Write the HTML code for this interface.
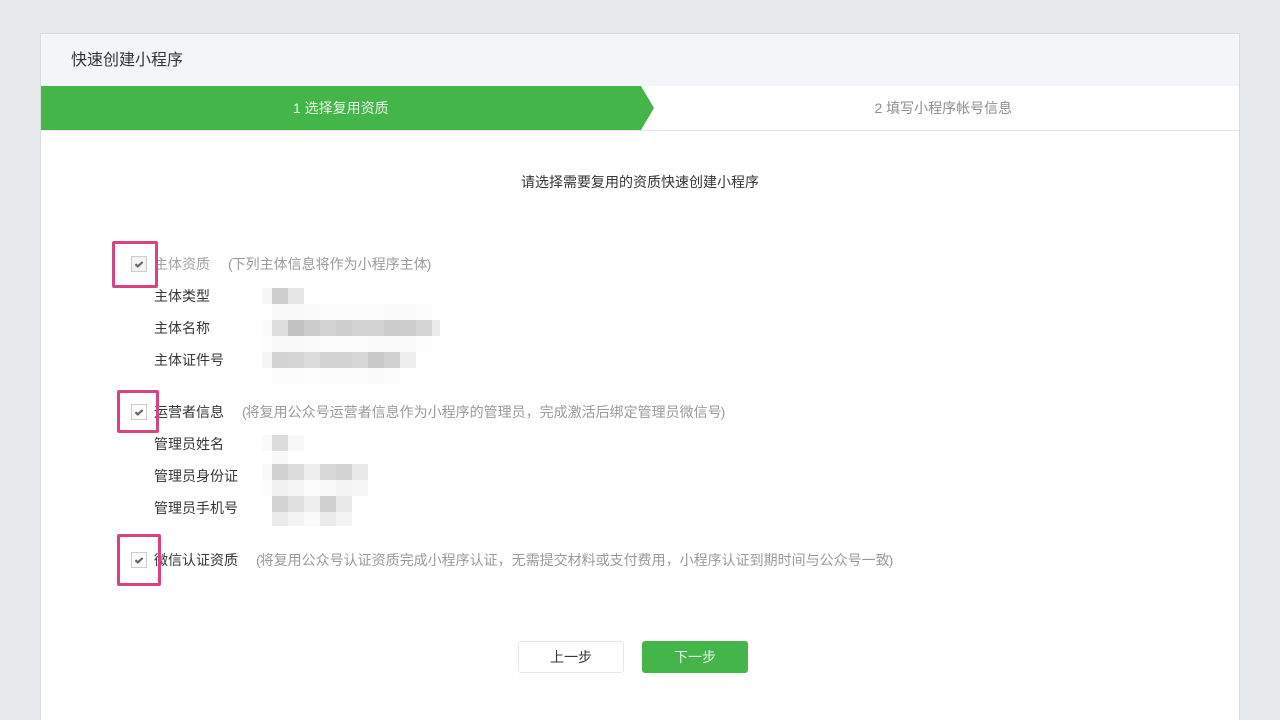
<!DOCTYPE html>
<html lang="zh-CN">
<head>
<meta charset="utf-8">
<title>快速创建小程序</title>
<style>
html,body{margin:0;padding:0;width:1280px;height:720px;overflow:hidden;background:#e6e8ec;}
body{position:relative;font-family:"Liberation Sans","Noto Sans CJK SC",sans-serif;font-size:14px;color:#353535;filter:blur(0.3px);}
.a{position:absolute;white-space:nowrap;}
#card{left:40px;top:33px;width:1198px;height:700px;background:#fff;border:1px solid #d9dadc;}
#head{left:41px;top:34px;width:1198px;height:52px;background:#f3f5f9;}
#title{left:71px;top:49px;font-size:16px;line-height:24px;color:#353535;}
#line{left:41px;top:130px;width:1198px;height:1px;background:#e7e7eb;}
.t{line-height:20px;}
.lab{left:154px;}
.hint{color:#9a9a9a;}
.n{letter-spacing:-1px;}
.cb{width:14px;height:14px;border:1px solid #cdcdcd;background:#fbfbfb;}
.cb svg{position:absolute;left:0;top:0;}
.pink{box-sizing:border-box;border:3px solid #d8447f;border-radius:2px;}
.r{display:flex;height:16px;position:absolute;}
.r i{display:block;height:16px;width:16px;}
.btn{box-sizing:border-box;height:32px;line-height:30px;text-align:center;border-radius:3px;top:641px;}
</style>
</head>
<body>
<div class="a" id="card"></div>
<div class="a" id="head"></div>
<div class="a" id="title">快速创建小程序</div>

<svg class="a" style="left:41px;top:86px" width="614" height="44"><polygon points="0,0 600,0 613,22 600,44 0,44" fill="#44b549"/></svg>
<div class="a t" style="left:293px;top:98px;color:#e9f6ea">1 选择复用资质</div>
<div class="a t" style="left:874.5px;top:98px;color:#8d8d8d">2 填写小程序帐号信息</div>
<div class="a" id="line"></div>

<div class="a t" style="left:521px;top:172px;color:#353535">请选择需要复用的资质快速创建小程序</div>

<!-- section 1 -->
<div class="a t lab" style="top:254px;color:#a3a3a3">主体资质</div>
<div class="a t hint" style="left:228px;top:254px"><span class="n">(</span>下列主体信息将作为小程序主<span class="n">体</span>)</div>
<div class="a t lab" style="top:286px">主体类型</div>
<div class="a t lab" style="top:318px">主体名称</div>
<div class="a t lab" style="top:350px">主体证件号</div>

<!-- section 2 -->
<div class="a t lab" style="top:402px">运营者信息</div>
<div class="a t hint" style="left:242px;top:402px"><span class="n">(</span>将复用公众号运营者信息作为小程序的管理员，完成激活后绑定管理员微信<span class="n">号</span>)</div>
<div class="a t lab" style="top:434px">管理员姓名</div>
<div class="a t lab" style="top:466px">管理员身份证</div>
<div class="a t lab" style="top:498px">管理员手机号</div>

<!-- section 3 -->
<div class="a t lab" style="top:550px">微信认证资质</div>
<div class="a t hint" style="left:256px;top:550px"><span class="n">(</span>将复用公众号认证资质完成小程序认证，无需提交材料或支付费用，小程序认证到期时间与公众号一<span class="n">致</span>)</div>

<!-- blurred values -->
<div class="r" style="left:262px;top:288px"><i style="width:10px;background:#f7f7f7"></i><i style="background:#cfcfcf"></i><i style="background:#e6e6e6"></i></div>
<div class="r" style="left:262px;top:304px"><i style="width:10px;background:#fefefe"></i><i style="background:#f9f9f9"></i><i style="background:#f9f9f9"></i><i style="background:#fafafa"></i><i style="background:#fcfcfc"></i><i style="background:#fcfcfc"></i><i style="background:#fcfcfc"></i><i style="background:#fcfcfc"></i><i style="background:#fbfbfb"></i><i style="background:#fbfbfb"></i><i style="background:#fcfcfc"></i></div>
<div class="r" style="left:262px;top:320px"><i style="width:10px;background:#fbfbfb"></i><i style="background:#dedede"></i><i style="background:#c2c2c2"></i><i style="background:#cbcbcb"></i><i style="background:#d2d2d2"></i><i style="background:#cecece"></i><i style="background:#d2d2d2"></i><i style="background:#d2d2d2"></i><i style="background:#cccccc"></i><i style="background:#cdcdcd"></i><i style="background:#d6d6d6"></i><i style="width:8px;background:#ebebeb"></i></div>
<div class="r" style="left:262px;top:336px"><i style="width:10px;background:#fdfdfd"></i><i style="background:#f9f9f9"></i><i style="background:#f9f9f9"></i><i style="background:#fbfbfb"></i><i style="background:#fcfcfc"></i><i style="background:#fcfcfc"></i><i style="background:#fcfcfc"></i><i style="background:#fbfbfb"></i><i style="background:#fbfbfb"></i><i style="background:#fbfbfb"></i><i style="background:#fdfdfd"></i></div>
<div class="r" style="left:262px;top:352px"><i style="width:10px;background:#f5f5f5"></i><i style="background:#d2d2d2"></i><i style="background:#d6d6d6"></i><i style="background:#dcdcdc"></i><i style="background:#d2d2d2"></i><i style="background:#d3d3d3"></i><i style="background:#d7d7d7"></i><i style="background:#c9c9c9"></i><i style="background:#d1d1d1"></i><i style="background:#eeeeee"></i></div>
<div class="r" style="left:262px;top:368px"><i style="width:10px;background:#fefefe"></i><i style="background:#fcfcfc"></i><i style="background:#fcfcfc"></i><i style="background:#fdfdfd"></i><i style="background:#fcfcfc"></i><i style="background:#fcfcfc"></i><i style="background:#fcfcfc"></i><i style="background:#fafafa"></i><i style="background:#fcfcfc"></i></div>

<div class="r" style="left:262px;top:435px"><i style="width:10px;background:#fafafa"></i><i style="background:#dcdcdc"></i><i style="background:#f8f8f8"></i></div>
<div class="r" style="left:262px;top:451px"><i style="width:10px;background:#fefefe"></i><i style="background:#f8f8f8"></i></div>
<div class="r" style="left:262px;top:464px"><i style="width:10px;background:#f9f9f9"></i><i style="background:#d1d1d1"></i><i style="background:#dcdcdc"></i><i style="background:#eeeeee"></i><i style="background:#d8d8d8"></i><i style="background:#d3d3d3"></i><i style="background:#e8e8e8"></i></div>
<div class="r" style="left:262px;top:480px"><i style="width:10px;background:#fcfcfc"></i><i style="background:#f1f1f1"></i><i style="background:#f5f5f5"></i><i style="background:#fcfcfc"></i><i style="background:#f9f9f9"></i><i style="background:#f4f4f4"></i><i style="background:#f7f7f7"></i></div>
<div class="r" style="left:272px;top:496px"><i style="background:#d2d2d2"></i><i style="background:#e0e0e0"></i><i style="background:#eeeeee"></i><i style="background:#d0d0d0"></i><i style="background:#e9e9e9"></i></div>
<div class="r" style="left:272px;top:512px;height:14px"><i style="height:14px;background:#ebebeb"></i><i style="height:14px;background:#f4f4f4"></i><i style="height:14px;background:#fbfbfb"></i><i style="height:14px;background:#ebebeb"></i><i style="height:14px;background:#f4f4f4"></i></div>

<!-- checkboxes -->
<div class="a cb" style="left:131px;top:256px;background:#f3f3f3">
<svg width="14" height="14" viewBox="0 0 14 14"><path d="M3.4 7.2 L5.8 9.4 L10.6 5" fill="none" stroke="#666" stroke-width="2.2"/></svg></div>
<div class="a cb" style="left:131px;top:404px">
<svg width="14" height="14" viewBox="0 0 14 14"><path d="M3.4 7.2 L5.8 9.4 L10.6 5" fill="none" stroke="#666" stroke-width="2.2"/></svg></div>
<div class="a cb" style="left:131px;top:552px">
<svg width="14" height="14" viewBox="0 0 14 14"><path d="M3.4 7.2 L5.8 9.4 L10.6 5" fill="none" stroke="#666" stroke-width="2.2"/></svg></div>

<!-- annotation boxes -->
<div class="a pink" style="left:112px;top:241px;width:46px;height:47px"></div>
<div class="a pink" style="left:117px;top:390px;width:42px;height:43px"></div>
<div class="a pink" style="left:117px;top:534px;width:44px;height:52px"></div>

<!-- buttons -->
<div class="a btn" style="left:518px;width:106px;background:#fff;border:1px solid #e4e8eb;color:#353535">上一步</div>
<div class="a btn" style="left:642px;width:106px;background:#44b549;border:1px solid #44b549;color:#e9f6ea">下一步</div>
</body>
</html>
